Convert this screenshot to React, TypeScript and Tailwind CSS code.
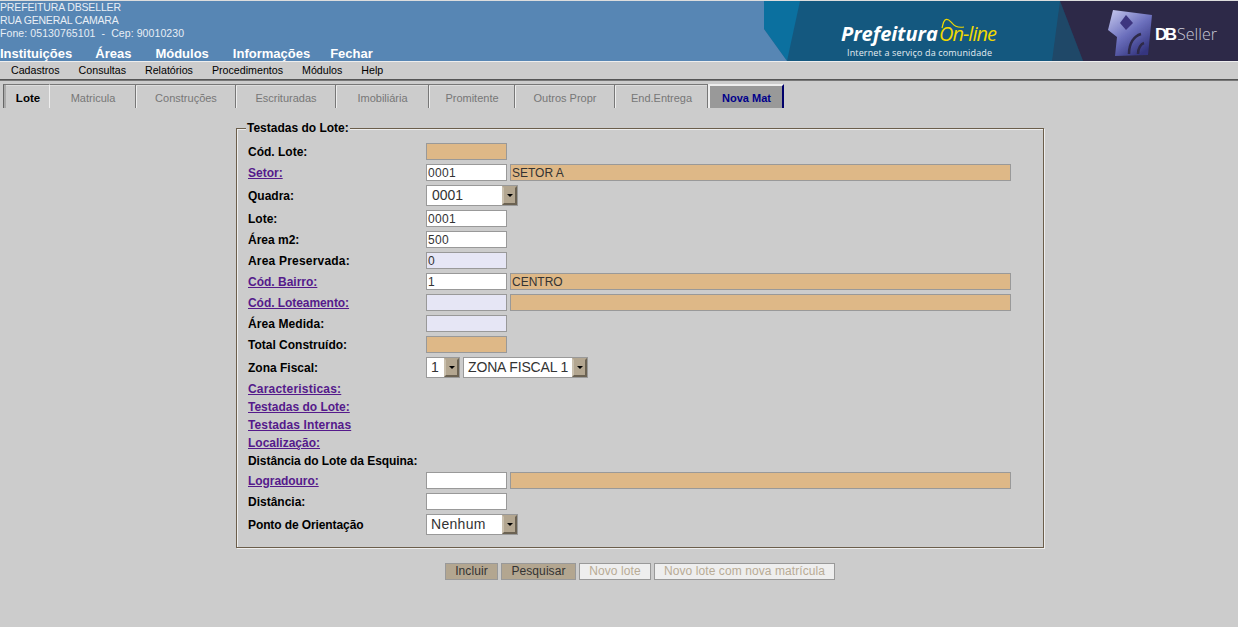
import React from 'react';

const Field = ({ value = '', bg = 'bg-white', w = 'w-[81px]', track = '' }: { value?: string; bg?: string; w?: string; track?: string }) => (
  <div className={`h-[17px] ${w} ${bg} ${track} shrink-0 border border-[#999] px-[1px] text-[12px] leading-[16px] text-[#333]`}>{value}</div>
);

const Combo = ({ value, w, track = '' }: { value: string; w: string; track?: string }) => (
  <div className={`flex h-[21px] ${w} items-stretch border border-[#999] bg-white text-[14px] leading-[19px] text-[#333]`}>
    <span className={`flex-1 truncate pl-[4px] ${track}`}>{value}</span>
    <span className="flex w-[15px] items-center justify-center border-2 border-t-[#b3a690] border-l-[#c9bfad] border-r-[#6b6252] border-b-[#6b6252] bg-[#b3a690]">
      <span className="h-0 w-0 border-x-[3px] border-t-[3px] border-x-transparent border-t-black" />
    </span>
  </div>
);

const Label = ({ children, link, track = '' }: { children: React.ReactNode; link?: boolean; track?: string }) => (
  <div className={`w-[178px] shrink-0 text-[12px] font-bold ${track} ${link ? 'text-[#551a8b] underline' : 'text-black'}`}>{children}</div>
);

const Row = ({ label, link, children, h = 'h-[17px]', track }: { label: string; link?: boolean; children?: React.ReactNode; h?: string; track?: string }) => (
  <div className={`flex ${h} items-center`}>
    <Label link={link} track={track}>{label}</Label>
    <div className="flex items-center gap-[3px]">{children}</div>
  </div>
);

const tabs = [
  { name: 'Matricula', w: 'w-[86px]' },
  { name: 'Construções', w: 'w-[100px]' },
  { name: 'Escrituradas', w: 'w-[100px]' },
  { name: 'Imobiliária', w: 'w-[93px]' },
  { name: 'Promitente', w: 'w-[86px]' },
  { name: 'Outros Propr', w: 'w-[100px]' },
  { name: 'End.Entrega', w: 'w-[93px]' },
];

// banner art on the right of the header
const Banner = () => (
  <svg viewBox="0 0 474 60" className="h-[60px] w-[474px] shrink-0">
    <defs>
      <linearGradient id="cube" x1="0" y1="0" x2="0.7" y2="1">
        <stop offset="0" stopColor="#c9cbf0" />
        <stop offset="0.55" stopColor="#6c70bd" />
        <stop offset="1" stopColor="#34357f" />
      </linearGradient>
      <filter id="soft">
        <feGaussianBlur stdDeviation="0.6" />
      </filter>
    </defs>
    <rect width="474" height="60" fill="#14587f" />
    <polygon points="0,0 36,0 23,60 0,28" fill="#0b709f" />
    <polygon points="0,28 23,60 0,60" fill="#5786b4" />
    <polygon points="296,0 319,60 288,60" fill="#1f4868" />
    <polygon points="296,0 474,0 474,60 319,60" fill="#2d2948" />
    <text x="77" y="40" fontFamily="'Open Sans', sans-serif" fontSize="20" fontWeight="700" fontStyle="italic" fill="#fff">Prefeitura</text>
    <text x="175" y="40" fontFamily="'Open Sans', sans-serif" fontSize="20" fontStyle="italic" fill="#f1d900" textLength="58">On-line</text>
    <path d="M178 27c1-3 1-6 3-8 3-2 5 1 7 3 3 4 6 5 12 4" stroke="#f1d900" strokeWidth="1.2" fill="none" />
    <text x="83" y="55" fontFamily="'Open Sans', sans-serif" fontSize="9" fill="#e4edf2" textLength="145">Internet a serviço da comunidade</text>
    <g filter="url(#soft)">
      <polygon points="349,9 388,14 384,54 351,55 353,36 344,29" fill="url(#cube)" />
      <polygon points="362,14 369,22 362,29 356,22" fill="#3c357f" />
      <path d="M365 53c0-11 5-18 12-20M374 53c0-6 3-10 6-11" stroke="#2d2948" strokeWidth="2.5" fill="none" />
    </g>
    <text x="391" y="39" fontFamily="'Liberation Sans', sans-serif" fontSize="17" fontWeight="700" fill="#fff" textLength="22">DB</text>
    <text x="413" y="39" fontFamily="'Open Sans', sans-serif" fontSize="16" fontWeight="300" fill="#c9c9d6" textLength="40">Seller</text>
  </svg>
);

export default function App() {
  return (
    <div className="h-[627px] w-[1238px] overflow-hidden bg-[#cccccc] font-['Liberation_Sans',Arial,sans-serif]">
      <div className="h-[1px] bg-[#ddd]" />
      <header className="flex h-[60px] justify-between bg-[#5786b4]">
        <div className="text-white">
          <div className="text-[10.5px] leading-[13px] tracking-[-0.15px] text-[#e8eef5]">PREFEITURA DBSELLER</div>
          <div className="text-[10.5px] leading-[13px] tracking-[-0.2px] text-[#e8eef5]">RUA GENERAL CAMARA</div>
          <div className="text-[10.5px] leading-[13px] tracking-[0.09px] text-[#e8eef5]">Fone: 05130765101 &nbsp;-&nbsp; Cep: 90010230</div>
          <nav className="mt-[6px] flex gap-[24px] text-[13px] font-bold leading-[15px]">
            <span className="-mr-[1px]">Instituições</span>
            <span>Áreas</span>
            <span>Módulos</span>
            <span>Informações</span>
            <span className="-ml-[4px]">Fechar</span>
          </nav>
        </div>
        <Banner />
      </header>
      <div className="flex h-[18px] items-center gap-[19px] border-t border-[#eee] pb-[2px] pl-[11px] text-[10.67px] text-black">
        <span>Cadastros</span>
        <span>Consultas</span>
        <span>Relatórios</span>
        <span>Procedimentos</span>
        <span>Módulos</span>
        <span>Help</span>
      </div>
      <div className="h-[2px] border-b border-[#777] bg-[#555]" />

      <div className="mt-[3px] flex h-[24px] pl-[3px]">
        <div className="flex w-[47px] items-center justify-center border-t border-l border-r border-t-[#777] border-l-[#666] border-r-[#eee] pt-[4px] pl-[3px] text-[11.5px] font-bold text-black shadow-[inset_2px_0_0_#aaa,inset_0_1px_0_#ddd]">Lote</div>
        {tabs.map((t) => (
          <div key={t.name} className={`flex ${t.w} items-center justify-center border-t border-r border-t-[#777] border-r-[#777] pt-[3px] pl-[1px] text-[11px] text-[#777] shadow-[1px_0_0_#eee,inset_0_1px_0_#ddd]`}>{t.name}</div>
        ))}
        <div className="flex w-[76px] items-center justify-center border-t-2 border-l-2 border-r-2 border-t-[#eee] border-l-[#eee] border-r-[#00006b] bg-[#999] pl-[1px] pt-[2px] text-[11px] font-bold text-[#00008b]">Nova Mat</div>
      </div>

      <div className="ml-[236px] mt-[13px] w-[808px]">
        <fieldset className="h-[427px] border border-[#6b5e4b] pl-[11px] pt-[8px] shadow-[inset_1px_1px_0_#eee,1px_1px_0_#eee]">
          <legend className="ml-[-2px] bg-[#cccccc] px-[1px] text-[12px] font-bold leading-[14px] text-black">Testadas do Lote:</legend>
          <div className="flex flex-col gap-[4px]">
            <Row label="Cód. Lote:"><Field bg="bg-[#deb887]" /></Row>
            <Row label="Setor:" link><Field value="0001" track="tracking-[0.33px]" /><Field value="SETOR A" bg="bg-[#deb887]" w="w-[501px]" /></Row>
            <Row label="Quadra:" h="h-[21px]"><Combo value="0001" w="w-[92px]" track="pl-[5px]" /></Row>
            <Row label="Lote:"><Field value="0001" track="tracking-[0.33px]" /></Row>
            <Row label="Área m2:"><Field value="500" track="tracking-[0.33px]" /></Row>
            <Row label="Area Preservada:" track="tracking-[0.2px]"><Field value="0" bg="bg-[#e6e6f5]" /></Row>
            <Row label="Cód. Bairro:" link><Field value="1" /><Field value="CENTRO" bg="bg-[#deb887]" w="w-[501px]" /></Row>
            <Row label="Cód. Loteamento:" link track="tracking-[-0.06px]"><Field bg="bg-[#e6e6f5]" /><Field bg="bg-[#deb887]" w="w-[501px]" /></Row>
            <Row label="Área Medida:" track="tracking-[0.08px]"><Field bg="bg-[#e6e6f5]" /></Row>
            <Row label="Total Construído:"><Field bg="bg-[#deb887]" /></Row>
            <Row label="Zona Fiscal:" h="h-[21px]"><Combo value="1" w="w-[34px]" /><Combo value="ZONA FISCAL 1" w="w-[125px]" track="tracking-[-0.15px]" /></Row>
            <div className="flex flex-col gap-[4px]">
              <Row label="Caracteristicas:" link h="h-[14px]" track="tracking-[0.2px]" />
              <Row label="Testadas do Lote:" link h="h-[14px]" />
              <Row label="Testadas Internas" link h="h-[14px]" track="tracking-[0.12px]" />
              <Row label="Localização:" link h="h-[14px]" />
              <div className="h-[14px] whitespace-nowrap text-[12px] font-bold leading-[14px] tracking-[-0.07px] text-black">Distância do Lote da Esquina:</div>
            </div>
            <Row label="Logradouro:" link track="tracking-[-0.06px]"><Field /><Field bg="bg-[#deb887]" w="w-[501px]" /></Row>
            <Row label="Distância:"><Field /></Row>
            <Row label="Ponto de Orientação" h="h-[21px]" track="tracking-[-0.1px]"><Combo value="Nenhum" w="w-[92px]" track="tracking-[0.3px]" /></Row>
          </div>
        </fieldset>
      </div>

      <div className="ml-[445px] mt-[15px] flex gap-[3px] text-[12px] tracking-[0.08px]">
        <button className="h-[17px] w-[53px] border border-[#999] bg-[#b3a690] leading-[15px] text-[#333]">Incluir</button>
        <button className="h-[17px] w-[75px] border border-[#999] bg-[#b3a690] leading-[15px] text-[#333]">Pesquisar</button>
        <button className="h-[17px] w-[72px] border border-[#999] bg-[#eeeeee] leading-[15px] text-[#b8ab95]">Novo lote</button>
        <button className="h-[17px] w-[181px] border border-[#999] bg-[#eeeeee] leading-[15px] text-[#b8ab95]">Novo lote com nova matrícula</button>
      </div>
    </div>
  );
}
